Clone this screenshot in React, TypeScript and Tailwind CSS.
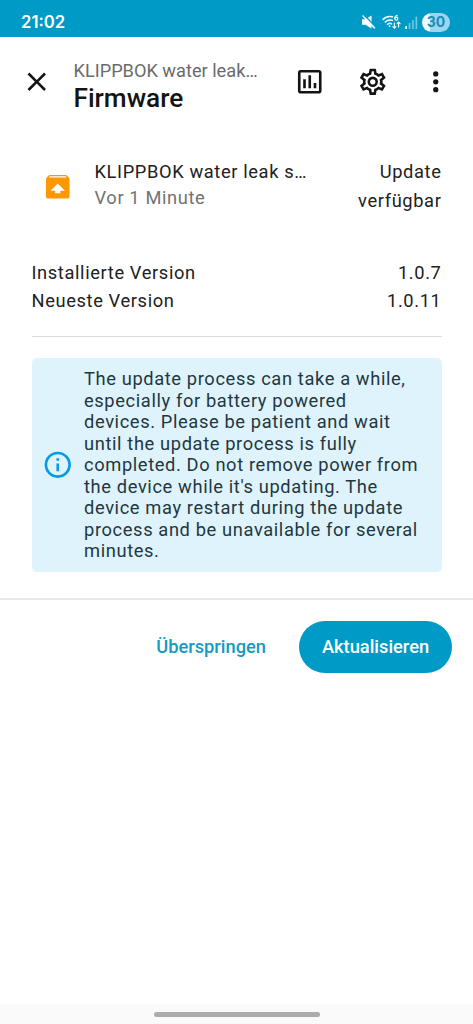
import React from 'react';

const icons = {
  close: 'M19,6.41L17.59,5L12,10.59L6.41,5L5,6.41L10.59,12L5,17.59L6.41,19L12,13.41L17.59,19L19,17.59L13.41,12L19,6.41Z',
  chart: 'M9 17H7V10H9V17M13 17H11V7H13V17M17 17H15V13H17V17M19 19H5V5H19V19.1M19 3H5C3.9 3 3 3.9 3 5V19C3 20.1 3.9 21 5 21H19C20.1 21 21 20.1 21 19V5C21 3.9 20.1 3 19 3Z',
  cog: 'M12,8A4,4 0 0,1 16,12A4,4 0 0,1 12,16A4,4 0 0,1 8,12A4,4 0 0,1 12,8M12,10A2,2 0 0,0 10,12A2,2 0 0,0 12,14A2,2 0 0,0 14,12A2,2 0 0,0 12,10M10,22C9.75,22 9.54,21.82 9.5,21.58L9.13,18.93C8.5,18.68 7.96,18.34 7.44,17.94L4.95,18.95C4.73,19.03 4.46,18.95 4.34,18.73L2.34,15.27C2.21,15.05 2.27,14.78 2.46,14.63L4.57,12.97L4.5,12L4.57,11L2.46,9.37C2.27,9.22 2.21,8.95 2.34,8.73L4.34,5.27C4.46,5.05 4.73,4.96 4.95,5.05L7.44,6.05C7.96,5.66 8.5,5.32 9.13,5.07L9.5,2.42C9.54,2.18 9.75,2 10,2H14C14.25,2 14.46,2.18 14.5,2.42L14.87,5.07C15.5,5.32 16.04,5.66 16.56,6.05L19.05,5.05C19.27,4.96 19.54,5.05 19.66,5.27L21.66,8.73C21.79,8.95 21.73,9.22 21.54,9.37L19.43,11L19.5,12L19.43,13L21.54,14.63C21.73,14.78 21.79,15.05 21.66,15.27L19.66,18.73C19.54,18.95 19.27,19.04 19.05,18.95L16.56,17.95C16.04,18.34 15.5,18.68 14.87,18.93L14.5,21.58C14.46,21.82 14.25,22 14,22H10M11.25,4L10.88,6.61C9.68,6.86 8.62,7.5 7.85,8.39L5.44,7.35L4.69,8.65L6.8,10.2C6.4,11.37 6.4,12.64 6.8,13.8L4.68,15.36L5.43,16.66L7.86,15.62C8.63,16.5 9.68,17.14 10.87,17.38L11.24,20H12.76L13.13,17.39C14.32,17.14 15.37,16.5 16.14,15.62L18.57,16.66L19.32,15.36L17.2,13.81C17.6,12.64 17.6,11.37 17.2,10.2L19.31,8.65L18.56,7.35L16.15,8.39C15.38,7.5 14.32,6.86 13.12,6.62L12.75,4H11.25Z',
  dots: 'M12,16A2,2 0 0,1 14,18A2,2 0 0,1 12,20A2,2 0 0,1 10,18A2,2 0 0,1 12,16M12,10A2,2 0 0,1 14,12A2,2 0 0,1 12,14A2,2 0 0,1 10,12A2,2 0 0,1 12,10M12,4A2,2 0 0,1 14,6A2,2 0 0,1 12,8A2,2 0 0,1 10,6A2,2 0 0,1 12,4Z',
  packageUp: 'M20.54,5.23L19.15,3.55C18.88,3.21 18.47,3 18,3H6C5.53,3 5.12,3.21 4.84,3.55L3.46,5.23C3.17,5.57 3,6 3,6.5V19A2,2 0 0,0 5,21H19A2,2 0 0,0 21,19V6.5C21,6 20.83,5.57 20.54,5.23M12,9.5L17.5,15H14V17H10V15H6.5L12,9.5M5.12,5L5.93,4H17.93L18.87,5H5.12Z',
  info: 'M11,9H13V7H11M12,20C7.59,20 4,16.41 4,12C4,7.59 7.59,4 12,4C16.41,4 20,7.59 20,12C20,16.41 16.41,20 12,20M12,2A10,10 0 0,0 2,12A10,10 0 0,0 12,22A10,10 0 0,0 22,12A10,10 0 0,0 12,2M11,17H13V11H11V17Z',
};

interface IconProps {
  path: string;
  className?: string;
}

const Icon: React.FC<IconProps> = ({ path, className = '' }) => (
  <svg viewBox="0 0 24 24" fill="currentColor" className={`size-[31.5px] shrink-0 ${className}`}>
    <path d={path} />
  </svg>
);

const StatusBar: React.FC = () => (
  <div className="flex h-[37px] items-center justify-between bg-[#009ac7] pt-[7px] pr-[23px] pl-[21px] text-white">
    <span className="font-['Inter',sans-serif] text-[16.7px] leading-none font-semibold">21:02</span>
    <div className="flex items-center">
      {/* muted speaker */}
      <svg width="15" height="14" viewBox="0 0 15 14" className="mr-[6px]">
        <path d="M1 4.2H4.5L10.5 0.6V13.4L4.5 9.8H1Z" fill="white" />
        <path d="M3.2 0.2L15 12.2" stroke="#009ac7" strokeWidth="1.4" />
        <path d="M2 1L13.4 12.8" stroke="white" strokeWidth="1.6" strokeLinecap="round" />
      </svg>
      {/* wifi 6 with traffic arrows */}
      <svg width="19" height="16" viewBox="0 0 19 16" className="mr-[4px]" fill="none" stroke="white" strokeLinecap="round">
        <path d="M1 5.4C3.6 2.6 7 1.9 10.4 2.8" strokeWidth="1.5" />
        <path d="M3.2 8C5.2 6 7.6 5.6 10.4 6.4" strokeWidth="1.5" />
        <path d="M5.5 10.3C6.7 9.2 8.2 9 9.6 9.8" strokeWidth="1.5" />
        <circle cx="7.6" cy="12.2" r="0.9" fill="white" stroke="none" />
        <path d="M15.2 1.4C13.4 1.7 12.8 3 12.8 4.4" strokeWidth="1.2" />
        <circle cx="14.4" cy="4.7" r="1.5" strokeWidth="1.2" />
        <path d="M12.4 9V14M10.9 12.6L12.4 14.2L13.9 12.6M16.6 13V8.4M15.1 9.6L16.6 8L18.1 9.6" strokeWidth="1.1" />
      </svg>
      <svg width="13" height="13" viewBox="0 0 13 13" className="mr-[4px]" fill="white">
        <rect x="0.3" y="10" width="1.7" height="3" rx="0.6" />
        <rect x="3.7" y="7" width="1.7" height="6" rx="0.6" opacity="0.45" />
        <rect x="7.1" y="4" width="1.7" height="9" rx="0.6" opacity="0.45" />
        <rect x="10.5" y="0.5" width="1.7" height="12.5" rx="0.6" opacity="0.45" />
      </svg>
      <div className="flex h-[19px] w-[28px] items-center justify-center rounded-full bg-linear-to-r from-[#f0faff] from-30% to-[#9bd6ee] to-30% font-['Inter',sans-serif] text-[14px] leading-none font-bold text-[#168eb9]">
        30
      </div>
    </div>
  </div>
);

const Header: React.FC = () => (
  <header className="flex h-[90px] items-center pr-[22px] pl-[21px] text-[#141414]">
    <button title="Schließen"><Icon path={icons.close} /></button>
    <div className="ml-[21px] pt-[6px] whitespace-nowrap">
      <div className="text-[18.2px] leading-[26px] text-[#6b6b6b]">KLIPPBOK water leak…</div>
      <h1 className="text-[26.2px] leading-[28px] font-medium">Firmware</h1>
    </div>
    <div className="ml-auto flex gap-[31.5px]">
      <button><Icon path={icons.chart} /></button>
      <button><Icon path={icons.cog} /></button>
      <button><Icon path={icons.dots} /></button>
    </div>
  </header>
);

const versions = [
  { label: 'Installierte Version', value: '1.0.7' },
  { label: 'Neueste Version', value: '1.0.11' },
];

const App: React.FC = () => {
  return (
    <div className="flex h-screen w-full flex-col bg-white font-['Roboto',sans-serif] text-[#212121]">
      <StatusBar />
      <Header />

      <main className="pr-[31.5px] pl-[31.5px] pt-[29px] text-[18.3px] tracking-[0.62px]">
        <div className="flex h-[61px] items-center">
          <Icon path={icons.packageUp} className="ml-[10.5px] text-[#ff9800]" />
          <div className="ml-[21px] pb-[4px] whitespace-nowrap">
            <div className="leading-[26px]">KLIPPBOK water leak s…</div>
            <div className="leading-[26px] text-[#727272]">Vor 1 Minute</div>
          </div>
          <div className="ml-auto w-[90px] pb-[1px] text-right leading-[29px]">Update verfügbar</div>
        </div>

        <div className="mt-[42px]">
          {versions.map((v) => (
            <div key={v.label} className="flex justify-between leading-[27.5px]">
              <span>{v.label}</span>
              <span>{v.value}</span>
            </div>
          ))}
        </div>

        <hr className="mt-[22px] border-[#dcdcdc]" />

        <div className="mt-[21px] flex h-[214px] items-center rounded-[5px] bg-[#dff3fc] pl-[10.5px] text-[#233740]">
          <Icon path={icons.info} className="text-[#039be5]" />
          <p className="ml-[10.5px] w-[338px] leading-[21.45px]">
            The update process can take a while, especially for battery powered devices. Please be patient and wait
            until the update process is fully completed. Do not remove power from the device while it's updating. The
            device may restart during the update process and be unavailable for several minutes.
          </p>
        </div>
      </main>

      <footer className="mt-[26px] flex items-center justify-end border-t-2 border-[#e8e8e8] pt-[21px] pr-[21px] text-[18.3px] font-medium">
        <button className="px-[23px] text-[#149bc1]">Überspringen</button>
        <button className="ml-[10px] h-[52px] w-[153px] rounded-full bg-[#009ac7] text-white">Aktualisieren</button>
      </footer>

      <div className="mt-auto flex h-[20px] items-center justify-center bg-[#fafafa]">
        <div className="h-[5px] w-[166px] rounded-full bg-[#acacac]" />
      </div>
    </div>
  );
};

export default App;
